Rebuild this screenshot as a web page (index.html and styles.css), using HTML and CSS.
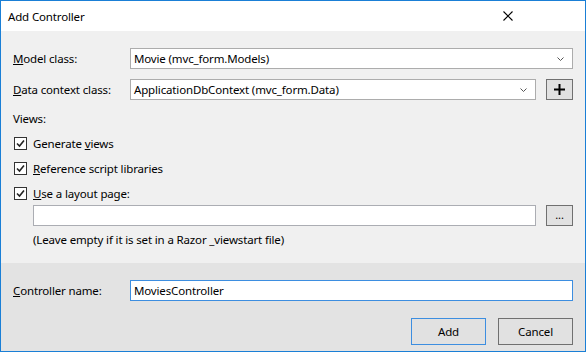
FILE: index.html
```html
<!DOCTYPE html>
<html lang="en">
<head>
    <meta charset="UTF-8">
    <title>Add Controller</title>
    <link rel="stylesheet" href="styles.css">
</head>
<body>
    <div class="dialog">
        <div class="titlebar">
            <span class="title">Add Controller</span>
            <svg class="close" width="10" height="10" viewBox="0 0 10 10">
                <path d="M0.5 0.5 L9.5 9.5 M9.5 0.5 L0.5 9.5" stroke="#000" stroke-width="1.1" fill="none"/>
            </svg>
        </div>
        <div class="content">
            <div class="row">
                <label class="label"><u>M</u>odel class:</label>
                <div class="combo">
                    <span>Movie (mvc_form.Models)</span>
                    <svg class="chev" width="7" height="4" viewBox="0 0 7 4"><path d="M0.5 0.5 L3.5 3.5 L6.5 0.5" stroke="#555" fill="none"/></svg>
                </div>
            </div>
            <div class="row">
                <label class="label"><u>D</u>ata context class:</label>
                <div class="combo">
                    <span>ApplicationDbContext (mvc_form.Data)</span>
                    <svg class="chev" width="7" height="4" viewBox="0 0 7 4"><path d="M0.5 0.5 L3.5 3.5 L6.5 0.5" stroke="#555" fill="none"/></svg>
                </div>
                <div class="small-btn plus">
                    <svg width="11" height="11" viewBox="0 0 11 11"><path d="M5.5 0 V11 M0 5.5 H11" stroke="#000" stroke-width="2" fill="none"/></svg>
                </div>
            </div>
            <div class="views-label">Views:</div>
            <div class="check-row">
                <span class="checkbox"><svg width="11" height="11" viewBox="0 0 11 11"><path d="M2 5.5 L4.5 8 L9 2.5" stroke="#222" stroke-width="1.6" fill="none"/></svg></span>
                <span>Generate <u>v</u>iews</span>
            </div>
            <div class="check-row">
                <span class="checkbox"><svg width="11" height="11" viewBox="0 0 11 11"><path d="M2 5.5 L4.5 8 L9 2.5" stroke="#222" stroke-width="1.6" fill="none"/></svg></span>
                <span><u>R</u>eference script libraries</span>
            </div>
            <div class="check-row">
                <span class="checkbox"><svg width="11" height="11" viewBox="0 0 11 11"><path d="M2 5.5 L4.5 8 L9 2.5" stroke="#222" stroke-width="1.6" fill="none"/></svg></span>
                <span><u>U</u>se a layout page:</span>
            </div>
            <div class="layout-row">
                <div class="textbox"></div>
                <div class="small-btn dots">...</div>
            </div>
            <div class="hint">(Leave empty if it is set in a Razor _viewstart file)</div>
        </div>
        <div class="footer">
            <div class="row">
                <label class="label"><u>C</u>ontroller name:</label>
                <div class="textbox focused">MoviesController</div>
            </div>
            <div class="buttons">
                <div class="btn default">Add</div>
                <div class="btn">Cancel</div>
            </div>
        </div>
    </div>
</body>
</html>
```

FILE: styles.css
```css
body {
    margin: 0;
    font-family: "Noto Sans", sans-serif;
    font-size: 11.5px;
    letter-spacing: -0.15px;
    color: #000000;
}
.dialog {
    width: 586px;
    height: 352px;
    box-sizing: border-box;
    border: 1px solid #1a7fd6;
    display: flex;
    flex-direction: column;
    background: #f0f0f0;
}
.titlebar {
    height: 30px;
    flex: none;
    background: #ffffff;
    display: flex;
    align-items: center;
    justify-content: space-between;
    padding: 0 72px 0 7px;
}
.title {
    font-size: 11.5px;
}
.content {
    height: 232px;
    flex: none;
    box-sizing: border-box;
    padding: 17px 12px 0 12px;
    background: #f0f0f0;
}
.row {
    display: flex;
    align-items: center;
    height: 21px;
    margin-bottom: 10px;
}
.label {
    width: 117px;
    flex: none;
}
.combo {
    flex: 1;
    height: 21px;
    box-sizing: border-box;
    border: 1px solid #acacac;
    background: #ffffff;
    display: flex;
    align-items: center;
    justify-content: space-between;
    padding: 0 8px 0 3px;
}
.small-btn {
    width: 27px;
    height: 21px;
    box-sizing: border-box;
    border: 1px solid #707070;
    background: #e1e1e1;
    margin-left: 10px;
    display: flex;
    align-items: center;
    justify-content: center;
    flex: none;
}
.dots {
    font-size: 11px;
    padding-bottom: 3px;
}
.views-label {
    height: 21px;
    line-height: 18px;
}
.check-row {
    display: flex;
    align-items: center;
    height: 25px;
    padding-left: 1px;
}
.checkbox {
    width: 13px;
    height: 13px;
    box-sizing: border-box;
    border: 1px solid #333333;
    background: #ffffff;
    margin-right: 6px;
    display: flex;
    align-items: center;
    justify-content: center;
}
.layout-row {
    display: flex;
    padding-left: 20px;
    margin-top: -1px;
}
.textbox {
    flex: 1;
    height: 21px;
    box-sizing: border-box;
    border: 1px solid #abadb3;
    background: #ffffff;
    padding: 0 3px;
    display: flex;
    align-items: center;
}
.textbox.focused {
    border-color: #3d8ee0;
}
.hint {
    padding-left: 20px;
    margin-top: 6px;
}
.footer {
    flex: 1;
    background: #e3e3e3;
    padding: 17px 12px 0 12px;
}
.buttons {
    display: flex;
    justify-content: flex-end;
    gap: 12px;
    margin-top: 17px;
}
.btn {
    width: 75px;
    height: 27px;
    box-sizing: border-box;
    border: 1px solid #707070;
    background: #e1e1e1;
    display: flex;
    align-items: center;
    justify-content: center;
}
.btn.default {
    border-color: #3d8ee0;
}
```
